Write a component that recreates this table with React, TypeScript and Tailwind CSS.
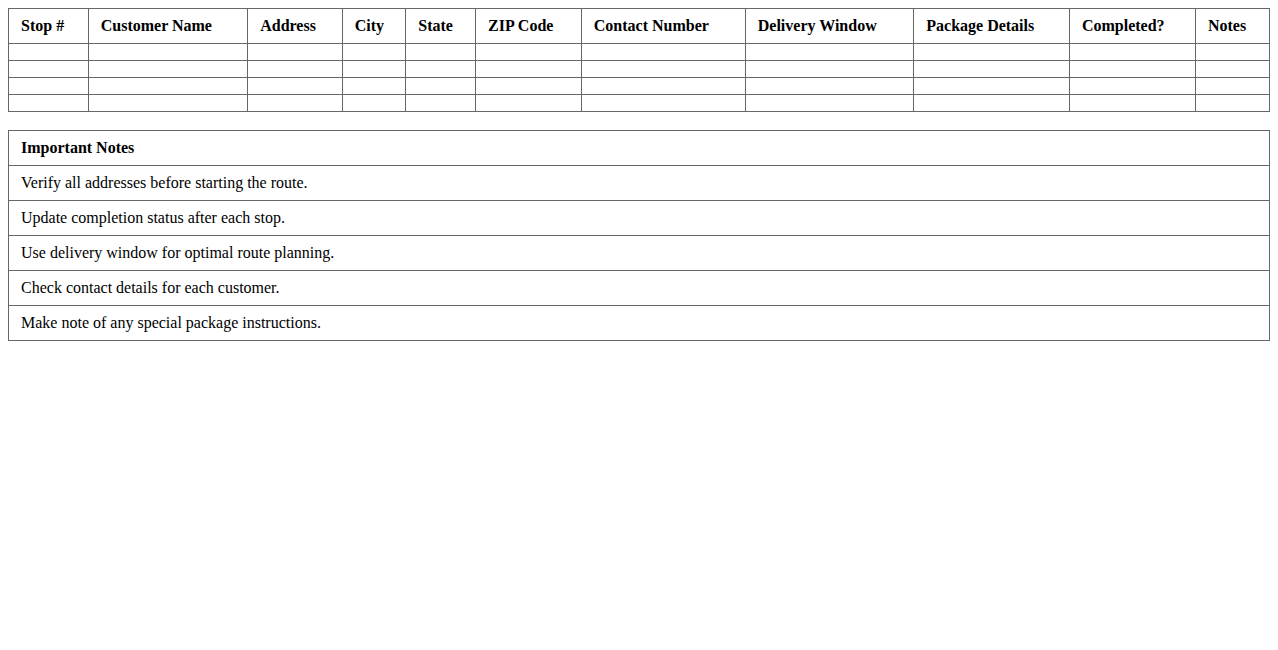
const COLUMNS = [
  "Stop #",
  "Customer Name",
  "Address",
  "City",
  "State",
  "ZIP Code",
  "Contact Number",
  "Delivery Window",
  "Package Details",
  "Completed?",
  "Notes",
];

const NOTES = [
  "Verify all addresses before starting the route.",
  "Update completion status after each stop.",
  "Use delivery window for optimal route planning.",
  "Check contact details for each customer.",
  "Make note of any special package instructions.",
];

export default function App() {
  return (
    <div className="p-2 bg-white text-black text-base font-['Liberation_Serif','Times_New_Roman',serif]">
      <table className="w-full border-collapse">
        <thead>
          <tr>
            {COLUMNS.map((c) => (
              <th
                key={c}
                className="border border-[#666] px-3 py-2 text-left font-bold leading-[18px]"
              >
                {c}
              </th>
            ))}
          </tr>
        </thead>
        <tbody>
          {[0, 1, 2, 3].map((r) => (
            <tr key={r}>
              {COLUMNS.map((c) => (
                <td key={c} className="border border-[#666] px-3 py-2"></td>
              ))}
            </tr>
          ))}
        </tbody>
      </table>

      <table className="w-full border-collapse mt-[18px]">
        <thead>
          <tr>
            <th className="border border-[#666] px-3 py-2 text-left font-bold leading-[18px]">
              Important Notes
            </th>
          </tr>
        </thead>
        <tbody>
          {NOTES.map((n) => (
            <tr key={n}>
              <td className="border border-[#666] px-3 py-2 leading-[18px]">{n}</td>
            </tr>
          ))}
        </tbody>
      </table>
    </div>
  );
}
